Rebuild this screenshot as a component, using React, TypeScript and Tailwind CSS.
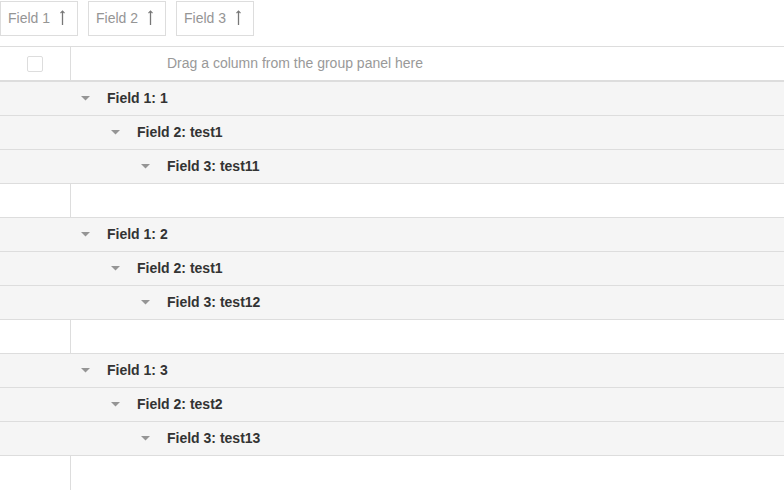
import React from "react";

const groups = [
  { f1: "1", f2: "test1", f3: "test11" },
  { f1: "2", f2: "test1", f3: "test12" },
  { f1: "3", f2: "test2", f3: "test13" },
];

const SortUp: React.FC = () => (
  <svg width="7" height="15" viewBox="0 0 7 15" className="ml-[9px] mt-[-3px]">
    <path d="M3.5 1.5V15" stroke="#777" strokeWidth="1.3" fill="none" />
    <path d="M1.5 3.2L3.5 1.2L5.5 3.2" stroke="#777" strokeWidth="1.2" fill="none" />
  </svg>
);

const Caret: React.FC = () => (
  <svg width="9" height="5" viewBox="0 0 9 5">
    <path d="M0 0H9L4.5 4.5Z" fill="#959595" />
  </svg>
);

const GroupRow: React.FC<{ level: number; label: string }> = ({ level, label }) => (
  <div className="flex h-[34px] items-center border-b border-[#dddddd] bg-[#f5f5f5]">
    <div style={{ width: 107 + level * 30 }} className="flex shrink-0 items-center justify-end pr-[17px]">
      <Caret />
    </div>
    <span className="text-[14px] font-bold text-[#333333]">{label}</span>
  </div>
);

const DataRow: React.FC<{ last?: boolean }> = ({ last }) => (
  <div className={last ? "flex h-[34px] bg-white" : "flex h-[34px] border-b border-[#dddddd] bg-white"}>
    <div className="w-[71px] shrink-0 border-r border-[#dddddd]" />
    <div className="flex-1" />
  </div>
);

const App: React.FC = () => {
  return (
    <div className="h-[490px] w-[784px] overflow-hidden bg-white font-['Liberation_Sans',Arial,sans-serif]">
      <div className="flex h-[46px] gap-[10px] pt-[1px]">
        {["Field 1", "Field 2", "Field 3"].map((f) => (
          <div
            key={f}
            className="flex h-[35px] w-[78px] items-center border border-[#dddddd] pl-[7px] text-[14px] text-[#959595]"
          >
            {f}
            <SortUp />
          </div>
        ))}
      </div>

      <div className="flex h-[36px] border-t border-b-2 border-[#dddddd]">
        <div className="flex w-[71px] shrink-0 items-center justify-center border-r border-[#dddddd]">
          <div className="h-[16px] w-[16px] rounded-[2px] border border-[#dddddd] bg-white" />
        </div>
        <div className="flex flex-1 items-center pl-[96px] text-[14px] text-[#999999]">
          Drag a column from the group panel here
        </div>
      </div>

      {groups.map((g, i) => (
        <React.Fragment key={g.f3}>
          <GroupRow level={0} label={`Field 1: ${g.f1}`} />
          <GroupRow level={1} label={`Field 2: ${g.f2}`} />
          <GroupRow level={2} label={`Field 3: ${g.f3}`} />
          <DataRow last={i === groups.length - 1} />
        </React.Fragment>
      ))}
    </div>
  );
};

export default App;
